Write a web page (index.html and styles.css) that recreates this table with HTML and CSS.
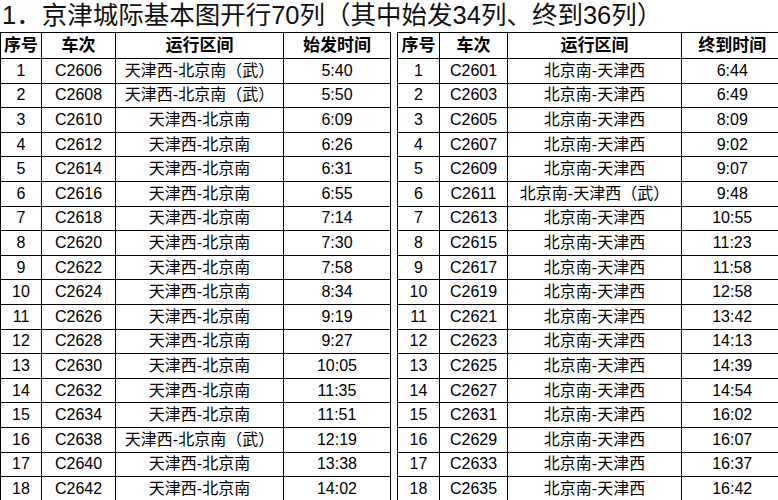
FILE: index.html
```html
<!DOCTYPE html>
<html lang="zh-CN">
<head>
<meta charset="utf-8">
<title>京津城际基本图</title>
<link rel="stylesheet" href="styles.css">
</head>
<body>
<div class="page">
  <div class="title">1．京津城际基本图开行70列（其中始发34列、终到36列）</div>
  <div class="tables">
    <table class="tt left">
      <colgroup><col class="c1"><col class="c2"><col class="c3"><col class="c4"></colgroup>
      <thead><tr><th>序号</th><th>车次</th><th>运行区间</th><th>始发时间</th></tr></thead>
      <tbody>
        <tr><td>1</td><td>C2606</td><td>天津西-北京南（武）</td><td>5:40</td></tr>
        <tr><td>2</td><td>C2608</td><td>天津西-北京南（武）</td><td>5:50</td></tr>
        <tr><td>3</td><td>C2610</td><td>天津西-北京南</td><td>6:09</td></tr>
        <tr><td>4</td><td>C2612</td><td>天津西-北京南</td><td>6:26</td></tr>
        <tr><td>5</td><td>C2614</td><td>天津西-北京南</td><td>6:31</td></tr>
        <tr><td>6</td><td>C2616</td><td>天津西-北京南</td><td>6:55</td></tr>
        <tr><td>7</td><td>C2618</td><td>天津西-北京南</td><td>7:14</td></tr>
        <tr><td>8</td><td>C2620</td><td>天津西-北京南</td><td>7:30</td></tr>
        <tr><td>9</td><td>C2622</td><td>天津西-北京南</td><td>7:58</td></tr>
        <tr><td>10</td><td>C2624</td><td>天津西-北京南</td><td>8:34</td></tr>
        <tr><td>11</td><td>C2626</td><td>天津西-北京南</td><td>9:19</td></tr>
        <tr><td>12</td><td>C2628</td><td>天津西-北京南</td><td>9:27</td></tr>
        <tr><td>13</td><td>C2630</td><td>天津西-北京南</td><td>10:05</td></tr>
        <tr><td>14</td><td>C2632</td><td>天津西-北京南</td><td>11:35</td></tr>
        <tr><td>15</td><td>C2634</td><td>天津西-北京南</td><td>11:51</td></tr>
        <tr><td>16</td><td>C2638</td><td>天津西-北京南（武）</td><td>12:19</td></tr>
        <tr><td>17</td><td>C2640</td><td>天津西-北京南</td><td>13:38</td></tr>
        <tr><td>18</td><td>C2642</td><td>天津西-北京南</td><td>14:02</td></tr>
      </tbody>
    </table>
    <table class="tt right">
      <colgroup><col class="c1"><col class="c2"><col class="c3"><col class="c4"></colgroup>
      <thead><tr><th>序号</th><th>车次</th><th>运行区间</th><th>终到时间</th></tr></thead>
      <tbody>
        <tr><td>1</td><td>C2601</td><td>北京南-天津西</td><td>6:44</td></tr>
        <tr><td>2</td><td>C2603</td><td>北京南-天津西</td><td>6:49</td></tr>
        <tr><td>3</td><td>C2605</td><td>北京南-天津西</td><td>8:09</td></tr>
        <tr><td>4</td><td>C2607</td><td>北京南-天津西</td><td>9:02</td></tr>
        <tr><td>5</td><td>C2609</td><td>北京南-天津西</td><td>9:07</td></tr>
        <tr><td>6</td><td>C2611</td><td>北京南-天津西（武）</td><td>9:48</td></tr>
        <tr><td>7</td><td>C2613</td><td>北京南-天津西</td><td>10:55</td></tr>
        <tr><td>8</td><td>C2615</td><td>北京南-天津西</td><td>11:23</td></tr>
        <tr><td>9</td><td>C2617</td><td>北京南-天津西</td><td>11:58</td></tr>
        <tr><td>10</td><td>C2619</td><td>北京南-天津西</td><td>12:58</td></tr>
        <tr><td>11</td><td>C2621</td><td>北京南-天津西</td><td>13:42</td></tr>
        <tr><td>12</td><td>C2623</td><td>北京南-天津西</td><td>14:13</td></tr>
        <tr><td>13</td><td>C2625</td><td>北京南-天津西</td><td>14:39</td></tr>
        <tr><td>14</td><td>C2627</td><td>北京南-天津西</td><td>14:54</td></tr>
        <tr><td>15</td><td>C2631</td><td>北京南-天津西</td><td>16:02</td></tr>
        <tr><td>16</td><td>C2629</td><td>北京南-天津西</td><td>16:07</td></tr>
        <tr><td>17</td><td>C2633</td><td>北京南-天津西</td><td>16:37</td></tr>
        <tr><td>18</td><td>C2635</td><td>北京南-天津西</td><td>16:42</td></tr>
      </tbody>
    </table>
  </div>
</div>
</body>
</html>
```
FILE: styles.css
```css
html, body {
  margin: 0;
  padding: 0;
  background: #fff;
}
body {
  width: 778px;
  height: 500px;
  overflow: hidden;
  font-family: "Liberation Sans", "Noto Sans CJK SC", sans-serif;
  color: #000;
}
.page {
  width: 778px;
}
.title {
  height: 32px;
  font-size: 25.5px;
  line-height: 30px;
  padding-left: 2px;
  color: #111;
  white-space: nowrap;
}
.tables {
  display: flex;
  gap: 6px;
  align-items: flex-start;
}
.tt {
  border-collapse: collapse;
  table-layout: fixed;
  font-size: 16px;
}
.tt th, .tt td {
  border: 1px solid #000;
  padding: 0;
  text-align: center;
  vertical-align: middle;
  white-space: nowrap;
  overflow: hidden;
  line-height: 18px;
}
.tt thead tr { height: 26px; }
.tt tbody tr { height: 24.6px; }
.tt th {
  font-size: 17px;
  font-weight: 700;
}
.left { width: 391px; }
.left .c1 { width: 41px; }
.left .c2 { width: 74px; }
.left .c3 { width: 168px; }
.left .c4 { width: 107px; }
.right { width: 381px; }
.right .c1 { width: 42px; }
.right .c2 { width: 68px; }
.right .c3 { width: 174px; }
.right .c4 { width: 97px; }
.right th:last-child, .right td:last-child {
  border-right: none;
  padding-left: 4px;
}
```
